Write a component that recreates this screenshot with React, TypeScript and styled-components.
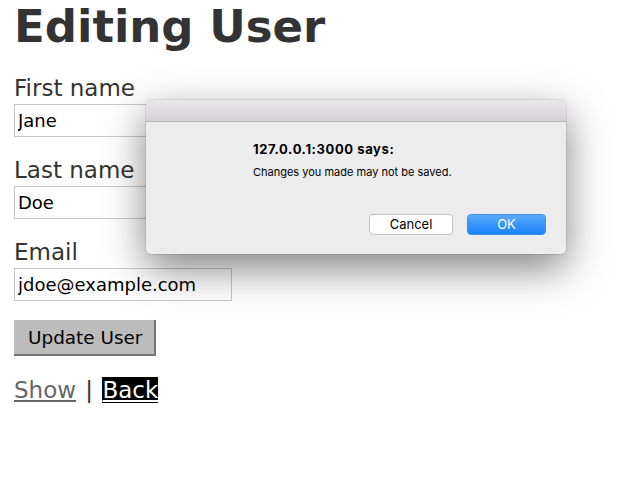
import React from "react";
import styled, { createGlobalStyle } from "styled-components";

const Global = createGlobalStyle`
  html, body { margin: 0; padding: 0; background: #ffffff; }
  body { font-family: "DejaVu Sans", Verdana, sans-serif; color: #333333; }
`;

const Page = styled.div`
  position: relative;
  width: 640px;
  height: 480px;
  padding: 1px 14px 0;
  box-sizing: border-box;
  overflow: hidden;
  font-size: 23px;
  line-height: 26px;
`;

const Heading = styled.h1`
  margin: 0 0 22px;
  font-size: 45px;
  line-height: 52px;
  font-weight: bold;
  color: #333333;
`;

const Form = styled.form`
  display: flex;
  flex-direction: column;
  align-items: flex-start;
  gap: 20px;
  margin: 0;
`;

const Field = styled.div`
  display: flex;
  flex-direction: column;
  align-items: flex-start;
  gap: 3px;
`;

const Label = styled.label`
  display: block;
  font-size: 23px;
  line-height: 26px;
  color: #333333;
`;

const Input = styled.input`
  box-sizing: border-box;
  width: 218px;
  height: 33px;
  margin: 0;
  padding: 0 3px;
  border: 1px solid #c8c8c8;
  border-radius: 0;
  background: #ffffff;
  font-family: "DejaVu Sans", Verdana, sans-serif;
  font-size: 18px;
  color: #000000;
  outline: none;
`;

const SubmitButton = styled.button`
  box-sizing: border-box;
  height: 36px;
  margin: -1px 0 0;
  padding: 0 12px 0 14px;
  border: none;
  border-right: 2px solid #767676;
  border-bottom: 2px solid #767676;
  background: #bcbcbc;
  font-family: "DejaVu Sans", Verdana, sans-serif;
  font-size: 18.4px;
  color: #000000;
  cursor: pointer;
`;

const Links = styled.p`
  margin: 21px 0 0;
  font-size: 23px;
  line-height: 26px;
  color: #333333;
  word-spacing: 2px;
`;

const ShowLink = styled.a`
  color: #666666;
  text-decoration: underline;
`;

const BackLink = styled.a`
  display: inline-block;
  background: #000000;
  color: #ffffff;
  text-decoration: underline;
`;

const Dialog = styled.div`
  position: absolute;
  left: 146px;
  top: 100px;
  width: 420px;
  height: 154px;
  border-radius: 5px;
  background: #ececec;
  box-shadow: 0 14px 40px rgba(0, 0, 0, 0.5), 0 0 0 1px rgba(0, 0, 0, 0.08);
  overflow: hidden;
  display: flex;
  flex-direction: column;
  font-family: Inter, "Liberation Sans", sans-serif;
`;

const TitleBar = styled.div`
  height: 21px;
  flex: none;
  background: linear-gradient(#e9e7e9, #d4d2d4);
  border-bottom: 1px solid #b3b3b3;
`;

const DialogBody = styled.div`
  flex: 1;
  display: flex;
  flex-direction: column;
  padding: 19px 20px 19px 107px;
`;

const DialogTitle = styled.div`
  font-size: 13px;
  font-weight: 700;
  line-height: 16px;
  letter-spacing: 0.6px;
  color: #000000;
`;

const DialogMessage = styled.div`
  margin-top: 8px;
  font-size: 11px;
  line-height: 14px;
  color: #000000;
`;

const DialogActions = styled.div`
  margin-top: auto;
  display: flex;
  justify-content: flex-end;
  gap: 14px;
`;

const DialogButton = styled.button<{ $primary?: boolean }>`
  box-sizing: border-box;
  width: ${(p) => (p.$primary ? "79px" : "84px")};
  height: 21px;
  padding: 0;
  border-radius: 4px;
  border: 1px solid ${(p) => (p.$primary ? "#3d8ef5" : "#c4c4c4")};
  background: ${(p) =>
    p.$primary ? "linear-gradient(#5aaafc, #1b83fb)" : "#ffffff"};
  color: ${(p) => (p.$primary ? "#ffffff" : "#000000")};
  font-family: Inter, "Liberation Sans", sans-serif;
  font-size: 13px;
  line-height: 19px;
`;

export default function App() {
  return (
    <>
      <Global />
      <Page>
        <Heading>Editing User</Heading>
        <Form onSubmit={(e) => e.preventDefault()}>
          <Field>
            <Label htmlFor="first">First name</Label>
            <Input id="first" defaultValue="Jane" />
          </Field>
          <Field>
            <Label htmlFor="last">Last name</Label>
            <Input id="last" defaultValue="Doe" />
          </Field>
          <Field>
            <Label htmlFor="email">Email</Label>
            <Input id="email" defaultValue="jdoe@example.com" />
          </Field>
          <SubmitButton type="submit">Update User</SubmitButton>
        </Form>
        <Links>
          <ShowLink href="#">Show</ShowLink> | <BackLink href="#">Back</BackLink>
        </Links>
        <Dialog role="alertdialog">
          <TitleBar />
          <DialogBody>
            <DialogTitle>127.0.0.1:3000 says:</DialogTitle>
            <DialogMessage>Changes you made may not be saved.</DialogMessage>
            <DialogActions>
              <DialogButton>Cancel</DialogButton>
              <DialogButton $primary>OK</DialogButton>
            </DialogActions>
          </DialogBody>
        </Dialog>
      </Page>
    </>
  );
}
